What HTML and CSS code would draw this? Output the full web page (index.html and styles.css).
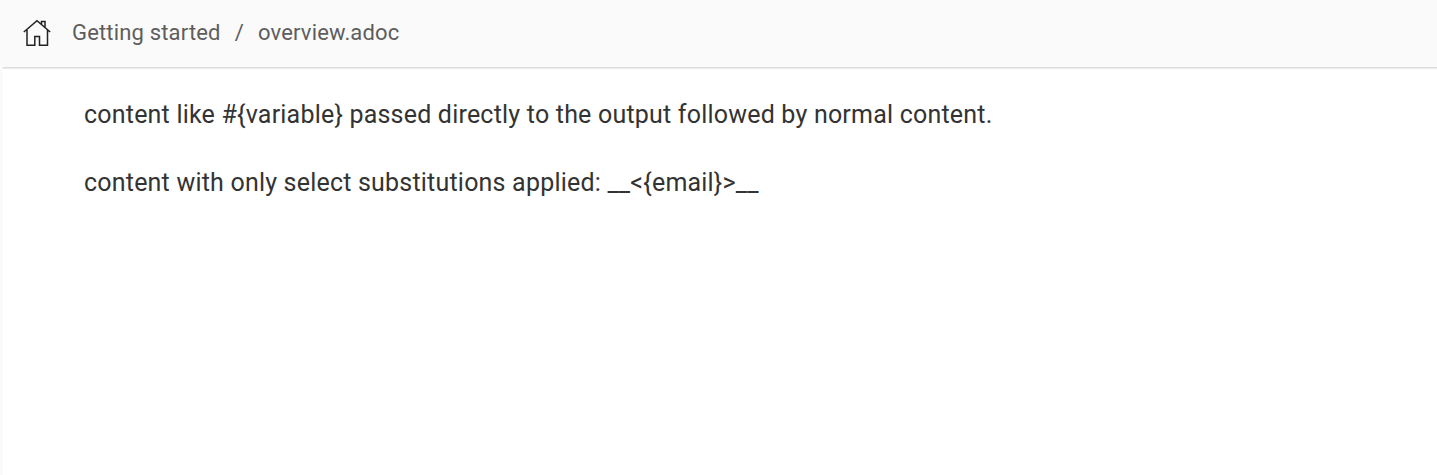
FILE: index.html
```html
<!DOCTYPE html>
<html lang="en">
<head>
<meta charset="utf-8">
<title>overview.adoc</title>
<link rel="stylesheet" href="styles.css">
</head>
<body>
<div class="pane">
<nav class="toolbar">
  <a class="home" aria-label="Home"><svg viewBox="0 0 28 28" width="28" height="28"><path d="M.8 13 14 1.700 27.200 13M4 11V26.300h7.800V17.600h4.700v8.700H24.500V11M18.500 5.500V2.500h3.500v6"/></svg></a>
  <span class="crumb">Getting started</span>
  <span class="separator">/</span>
  <span class="crumb">overview.adoc</span>
</nav>
<main class="doc">
  <p>content like #{variable} passed directly to the output followed by normal content.</p>
  <p>content with only select substitutions applied: __&lt;{email}&gt;__</p>
</main>
</div>
</body>
</html>
```
FILE: styles.css
```css
body { margin: 0; background: #fff; font-family: Roboto, sans-serif; }
.pane { box-sizing: border-box; min-height: 100vh; border-left: 3px solid #fafafa; }
.toolbar { box-sizing: border-box; height: 69px; padding: 0 20px 2px; display: flex; align-items: center; background: #fafafa; border-bottom: 1px solid #ebebeb; box-shadow: inset 0 -1px #dcdcdc; color: #5d5d5d; font-size: 22px; letter-spacing: .17px; }
.home { display: flex; margin-right: 21px; }
.home svg { fill: none; stroke: #222; stroke-width: 1.5; }
.crumb, .separator { padding-bottom: 2px; }
.separator { margin: 0 14px; }
.doc { padding: 28px 81px; color: #333; font-size: 25px; line-height: 36px; letter-spacing: .203px; }
.doc p { margin: 0 0 32px; }
```
